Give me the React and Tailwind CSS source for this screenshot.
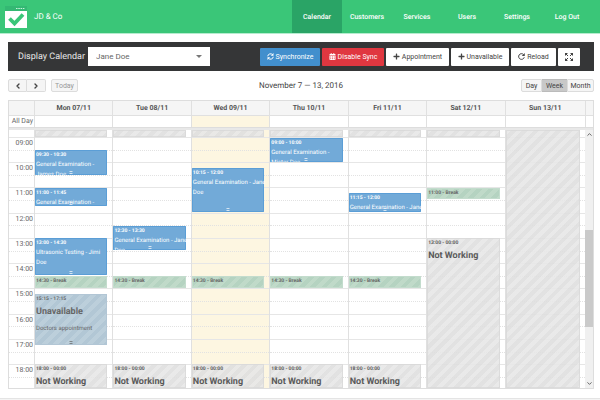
import { FaCalendarAlt, FaPlus } from "react-icons/fa";
import { ChevronDown, ChevronLeft, ChevronRight, ChevronUp } from "lucide-react";
import clsx from "clsx";

// visible part of the day, in minutes
const DAY_START = 8 * 60 + 42;
const DAY_END = 18 * 60 + 56;

const COLUMNS = "grid-cols-[25px_repeat(6,minmax(0,78fr))_minmax(0,80fr)_8px]";

const NAV = ["Calendar", "Customers", "Services", "Users", "Settings", "Log Out"];

const notWorkingMorning = { type: "off", from: "08:00", to: "08:58" };
const notWorkingEvening = { type: "off", from: "18:00", to: "24:00", time: "18:00 - 00:00", title: "Not Working" };
const lunch = { type: "break", from: "14:30", to: "14:59", time: "14:30 - Break" };

const DAYS = [
  {
    label: "Mon 07/11",
    events: [
      notWorkingMorning,
      { type: "booking", from: "09:30", to: "10:28", time: "09:30 - 10:30", title: "General Examination - James Doe" },
      { type: "booking", from: "11:00", to: "11:42", time: "11:00 - 11:45", title: "General Examination - James Doe" },
      { type: "booking", from: "13:00", to: "14:28", time: "13:00 - 14:30", title: "Ultrasonic Testing - Jimi Doe" },
      lunch,
      { type: "unavailable", from: "15:13", to: "17:13", time: "15:15 - 17:15", title: "Unavailable", note: "Doctors appointment" },
      notWorkingEvening,
    ],
  },
  {
    label: "Tue 08/11",
    events: [
      notWorkingMorning,
      { type: "booking", from: "12:30", to: "13:28", time: "12:30 - 13:30", title: "General Examination - Jane Doe" },
      lunch,
      notWorkingEvening,
    ],
  },
  {
    label: "Wed 09/11",
    today: true,
    events: [
      notWorkingMorning,
      { type: "booking", from: "10:13", to: "11:58", time: "10:15 - 12:00", title: "General Examination - Jane Doe" },
      lunch,
      notWorkingEvening,
    ],
  },
  {
    label: "Thu 10/11",
    events: [
      notWorkingMorning,
      { type: "booking", from: "09:00", to: "09:58", time: "09:00 - 10:00", title: "General Examination - Mister Doe" },
      lunch,
      notWorkingEvening,
    ],
  },
  {
    label: "Fri 11/11",
    events: [
      notWorkingMorning,
      { type: "booking", from: "11:13", to: "11:58", time: "11:15 - 12:00", title: "General Examination - Jane Doe" },
      lunch,
      notWorkingEvening,
    ],
  },
  {
    label: "Sat 12/11",
    events: [
      notWorkingMorning,
      { type: "break", from: "11:00", to: "11:27", time: "11:00 - Break" },
      { type: "off", from: "13:00", to: "24:00", time: "13:00 - 00:00", title: "Not Working" },
    ],
  },
  { label: "Sun 13/11", events: [{ type: "off", from: "00:00", to: "24:00" }] },
];

const toMinutes = (value) => {
  const [hours, minutes] = value.split(":").map(Number);
  return hours * 60 + minutes;
};

const toPercent = (minutes) => ((minutes - DAY_START) / (DAY_END - DAY_START)) * 100;

// half-hour slots, the first and the last one cut by the visible range
const SLOTS = [{ start: DAY_START, length: 9 * 60 - DAY_START }];
for (let start = 9 * 60; start < DAY_END; start += 30) {
  SLOTS.push({ start, length: Math.min(30, DAY_END - start) });
}

export default function App() {
  return (
    <div className="overflow-hidden bg-white font-['Roboto','Liberation_Sans',sans-serif] text-[7px] leading-[10px] text-[#444] [text-rendering:geometricPrecision]">
      <Header />
      <main className="pt-2 pr-[6px] pb-[9px] pl-2">
        <Toolbar />
        <CalendarNav />
        <WeekView />
      </main>
      <footer className="h-[2px] border-t border-[#e4e4e4] bg-[#f4f4f4]" />
    </div>
  );
}

function Header() {
  return (
    <header className="flex h-[34px] items-stretch justify-between border-b border-[#b5ecce] bg-[#3ac678] pr-2 pl-[5px]">
      <div className="flex items-center gap-[7px]">
        <Logo />
        <span className="text-[8px] text-white">JD &amp; Co</span>
      </div>
      <nav className="grid grid-cols-6">
        {NAV.map((item, index) => (
          <a
            key={item}
            href="#"
            className={clsx(
              "flex w-[50px] items-center justify-center font-medium text-white",
              index === 0 && "bg-[#2aa466]"
            )}
          >
            {item}
          </a>
        ))}
      </nav>
    </header>
  );
}

function Logo() {
  return (
    <svg width="22" height="22" viewBox="0 0 22 22" aria-hidden="true">
      <rect width="22" height="5" fill="#34b873" />
      <path d="M11 2.500h9" stroke="#c9f3dc" strokeWidth="1" strokeDasharray="1.5 0.8" />
      <rect y="5" width="22" height="17" fill="#fff" />
      <path d="M4.500 12.500l5 5L18 8.500" fill="none" stroke="#3ac678" strokeWidth="3.8" />
    </svg>
  );
}

function Toolbar() {
  return (
    <div className="flex items-center justify-between bg-[#353637] py-[5px] pr-[14px] pl-[10px]">
      <div className="flex items-center gap-[3px]">
        <label htmlFor="calendar" className="text-[9px] text-[#e8e8e8]">
          Display Calendar
        </label>
        <div className="relative">
          <select
            id="calendar"
            className="block h-[19px] w-[122px] appearance-none bg-white pr-4 pl-[8px] text-[8px] text-[#666]"
          >
            <option>Jane Doe</option>
          </select>
          <span className="pointer-events-none absolute top-2 right-2 border-x-[3px] border-t-[3px] border-x-transparent border-t-[#777]" />
        </div>
      </div>
      <div className="flex gap-[2px]">
        <ToolbarButton icon={<SyncIcon />} className="w-[60px] bg-[#428fcd] text-white">Synchronize</ToolbarButton>
        <ToolbarButton icon={<FaCalendarAlt size={7} />} className="w-[62px] bg-[#e03740] text-white">Disable Sync</ToolbarButton>
        <ToolbarButton icon={<FaPlus size={7} />} className="w-[63px] bg-white">Appointment</ToolbarButton>
        <ToolbarButton icon={<FaPlus size={7} />} className="w-[58px] bg-white">Unavailable</ToolbarButton>
        <ToolbarButton icon={<ReloadIcon />} className="w-[45px] bg-white">Reload</ToolbarButton>
        <ToolbarButton icon={<ExpandIcon />} label="Fullscreen" className="w-[22px] bg-white" />
      </div>
    </div>
  );
}

function ToolbarButton({ icon, label, className, children }) {
  return (
    <button
      type="button"
      aria-label={label}
      className={clsx("flex h-[18px] items-center justify-center gap-[2px] rounded-[1px] whitespace-nowrap", className)}
    >
      {icon}
      {children}
    </button>
  );
}

function SyncIcon() {
  return (
    <svg width="7" height="7" viewBox="0 0 14 14" fill="none" stroke="currentColor" strokeWidth="2" aria-hidden="true">
      <path d="M1.500 6.500A5.500 5.500 0 0 1 11.500 4M12.500 7.500A5.500 5.500 0 0 1 2.500 10" />
      <path d="M13 0v5.500H7.500zM1 14V8.500h5.500z" fill="currentColor" stroke="none" />
    </svg>
  );
}

function ReloadIcon() {
  return (
    <svg width="7" height="7" viewBox="0 0 14 14" fill="none" stroke="currentColor" strokeWidth="2" aria-hidden="true">
      <path d="M12.500 8.500A5.700 5.700 0 1 1 11 3" />
      <path d="M13.500 0v6h-6z" fill="currentColor" stroke="none" />
    </svg>
  );
}

function ExpandIcon() {
  return (
    <svg width="8" height="8" viewBox="0 0 16 16" stroke="currentColor" strokeWidth="2" aria-hidden="true">
      <path d="M2 2l4 4M14 2L10 6M2 14l4-4M14 14L10 10" />
      <path d="M0 0h6L0 6zM16 0v6l-6-6zM0 16v-6l6 6zM16 16h-6l6-6z" fill="currentColor" stroke="none" />
    </svg>
  );
}

function CalendarNav() {
  const button = "flex h-[13px] items-center justify-center border border-[#dcdcdc] bg-[#f5f5f5]";

  return (
    <div className="grid grid-cols-[1fr_auto_1fr] items-center py-2">
      <div className="flex gap-[5px]">
        <div className="flex">
          <button type="button" aria-label="Previous week" className={clsx(button, "w-[19px] rounded-l-[2px]")}>
            <ChevronLeft size={8} strokeWidth={4} />
          </button>
          <button type="button" aria-label="Next week" className={clsx(button, "w-[19px] rounded-r-[2px] border-l-0")}>
            <ChevronRight size={8} strokeWidth={4} />
          </button>
        </div>
        <button type="button" disabled className={clsx(button, "w-[27px] rounded-[2px] text-[#999]")}>
          Today
        </button>
      </div>
      <h2 className="text-[8px] text-[#444]">November 7 — 13, 2016</h2>
      <div className="flex justify-end">
        <button type="button" className={clsx(button, "w-[21px] rounded-l-[2px]")}>Day</button>
        <button type="button" aria-pressed="true" className="flex h-[13px] w-[25px] items-center justify-center border-y border-[#bbb] bg-[#c8c8c8]">
          Week
        </button>
        <button type="button" className={clsx(button, "w-[27px] rounded-r-[2px]")}>Month</button>
      </div>
    </div>
  );
}

function WeekView() {
  return (
    <section className="border border-[#ddd]">
      <div className={clsx("grid h-[14px] bg-[#f5f5f5]", COLUMNS)}>
        <span />
        {DAYS.map((day) => (
          <div key={day.label} className="flex items-center justify-center border-l border-[#e0e0e0] font-bold text-[#555]">
            {day.label}
          </div>
        ))}
        <span className="border-l border-[#e0e0e0]" />
      </div>
      <div className={clsx("grid h-3 border-t border-[#e0e0e0]", COLUMNS)}>
        <span className="pr-px text-right whitespace-nowrap text-[#666]">All Day</span>
        {DAYS.map((day) => (
          <div key={day.label} className={clsx("border-l border-[#e0e0e0]", day.today && "bg-[#fdf6e1]")} />
        ))}
        <span className="border-l border-[#e0e0e0]" />
      </div>
      <div className="h-[3px] border-t border-[#ddd] bg-[#e8e8e8]" />
      <div className={clsx("relative grid h-[258px] overflow-hidden", COLUMNS)}>
        <TimeAxis />
        {DAYS.map((day) => (
          <DayColumn key={day.label} day={day} />
        ))}
        <Scrollbar />
      </div>
    </section>
  );
}

function TimeAxis() {
  return (
    <div className="flex flex-col">
      {SLOTS.map((slot) => (
        <div
          key={slot.start}
          className={clsx(
            "min-h-0 basis-0 pr-px text-right text-[#666]",
            slot.start >= 540 && "border-t",
            slot.start % 60 === 0 ? "border-[#e6e6e6]" : "border-dotted border-[#e2e2e2]"
          )}
          style={{ flexGrow: slot.length }}
        >
          {slot.start % 60 === 0 && `${String(slot.start / 60).padStart(2, "0")}:00`}
        </div>
      ))}
    </div>
  );
}

function DayColumn({ day }) {
  return (
    <div className={clsx("relative flex flex-col border-l border-[#e0e0e0]", day.today && "bg-[#fdf6e1]")}>
      {SLOTS.map((slot) => (
        <div
          key={slot.start}
          className={clsx(
            "min-h-0 basis-0",
            slot.start >= 540 && "border-t",
            slot.start % 60 === 0 ? "border-[#e6e6e6]" : "border-dotted border-[#e2e2e2]"
          )}
          style={{ flexGrow: slot.length }}
        />
      ))}
      {day.events.map((event) => (
        <CalendarEvent key={event.from} event={event} />
      ))}
    </div>
  );
}

function CalendarEvent({ event }) {
  const top = Math.max(0, toPercent(toMinutes(event.from)));
  const bottom = Math.min(100, toPercent(toMinutes(event.to)));
  const resizable = event.type === "booking" || event.type === "unavailable";
  const styles = {
    booking: "rounded-[1px] bg-[#72aad8] text-white inset-ring inset-ring-[#5b9ed6]",
    break:
      "bg-[repeating-linear-gradient(135deg,#c0dac9_0_4px,#b5d3c1_4px_8px)] text-[#666] inset-ring inset-ring-[#c3dccd]",
    off: "bg-[repeating-linear-gradient(135deg,#e7e7e7e8_0_4px,#dfdfdfe8_4px_8px)] text-[#5a5a5a] inset-ring inset-ring-[#d8d8d8]/80",
    unavailable:
      "bg-[repeating-linear-gradient(135deg,#bccfdb_0_4px,#b2c7d5_4px_8px)] text-[#666] inset-ring inset-ring-[#b2c6d5]",
  };

  return (
    <div
      className={clsx("absolute right-[5px] left-0 overflow-y-clip pt-px pl-px", styles[event.type])}
      style={{ top: `${top}%`, height: `${bottom - top}%` }}
    >
      <p className="text-[5px] leading-[9px] font-bold whitespace-nowrap">{event.time}</p>
      {event.type === "booking" ? (
        <p className="-mr-[3px] text-[6px] leading-[10px]">{event.title}</p>
      ) : (
        event.title && <p className="pt-[3px] text-[9px] leading-[11px] font-bold whitespace-nowrap">{event.title}</p>
      )}
      {event.note && <p className="pt-[6px] text-[6px] leading-[10px]">{event.note}</p>}
      {resizable && (
        <span className="absolute bottom-px left-1/2 h-[3px] w-[3px] -translate-x-1/2 border-y border-current opacity-70" />
      )}
    </div>
  );
}

function Scrollbar() {
  return (
    <div className="flex flex-col items-center bg-[#f0f0f0] text-[#555]">
      <ChevronUp size={7} strokeWidth={3} className="mt-px shrink-0" />
      <div className="flex w-full flex-1 flex-col">
        <div className="grow-[92]" />
        <div className="grow-[97] bg-[#cacaca]" />
        <div className="grow-[53]" />
      </div>
      <ChevronDown size={7} strokeWidth={3} className="mb-px shrink-0" />
    </div>
  );
}
